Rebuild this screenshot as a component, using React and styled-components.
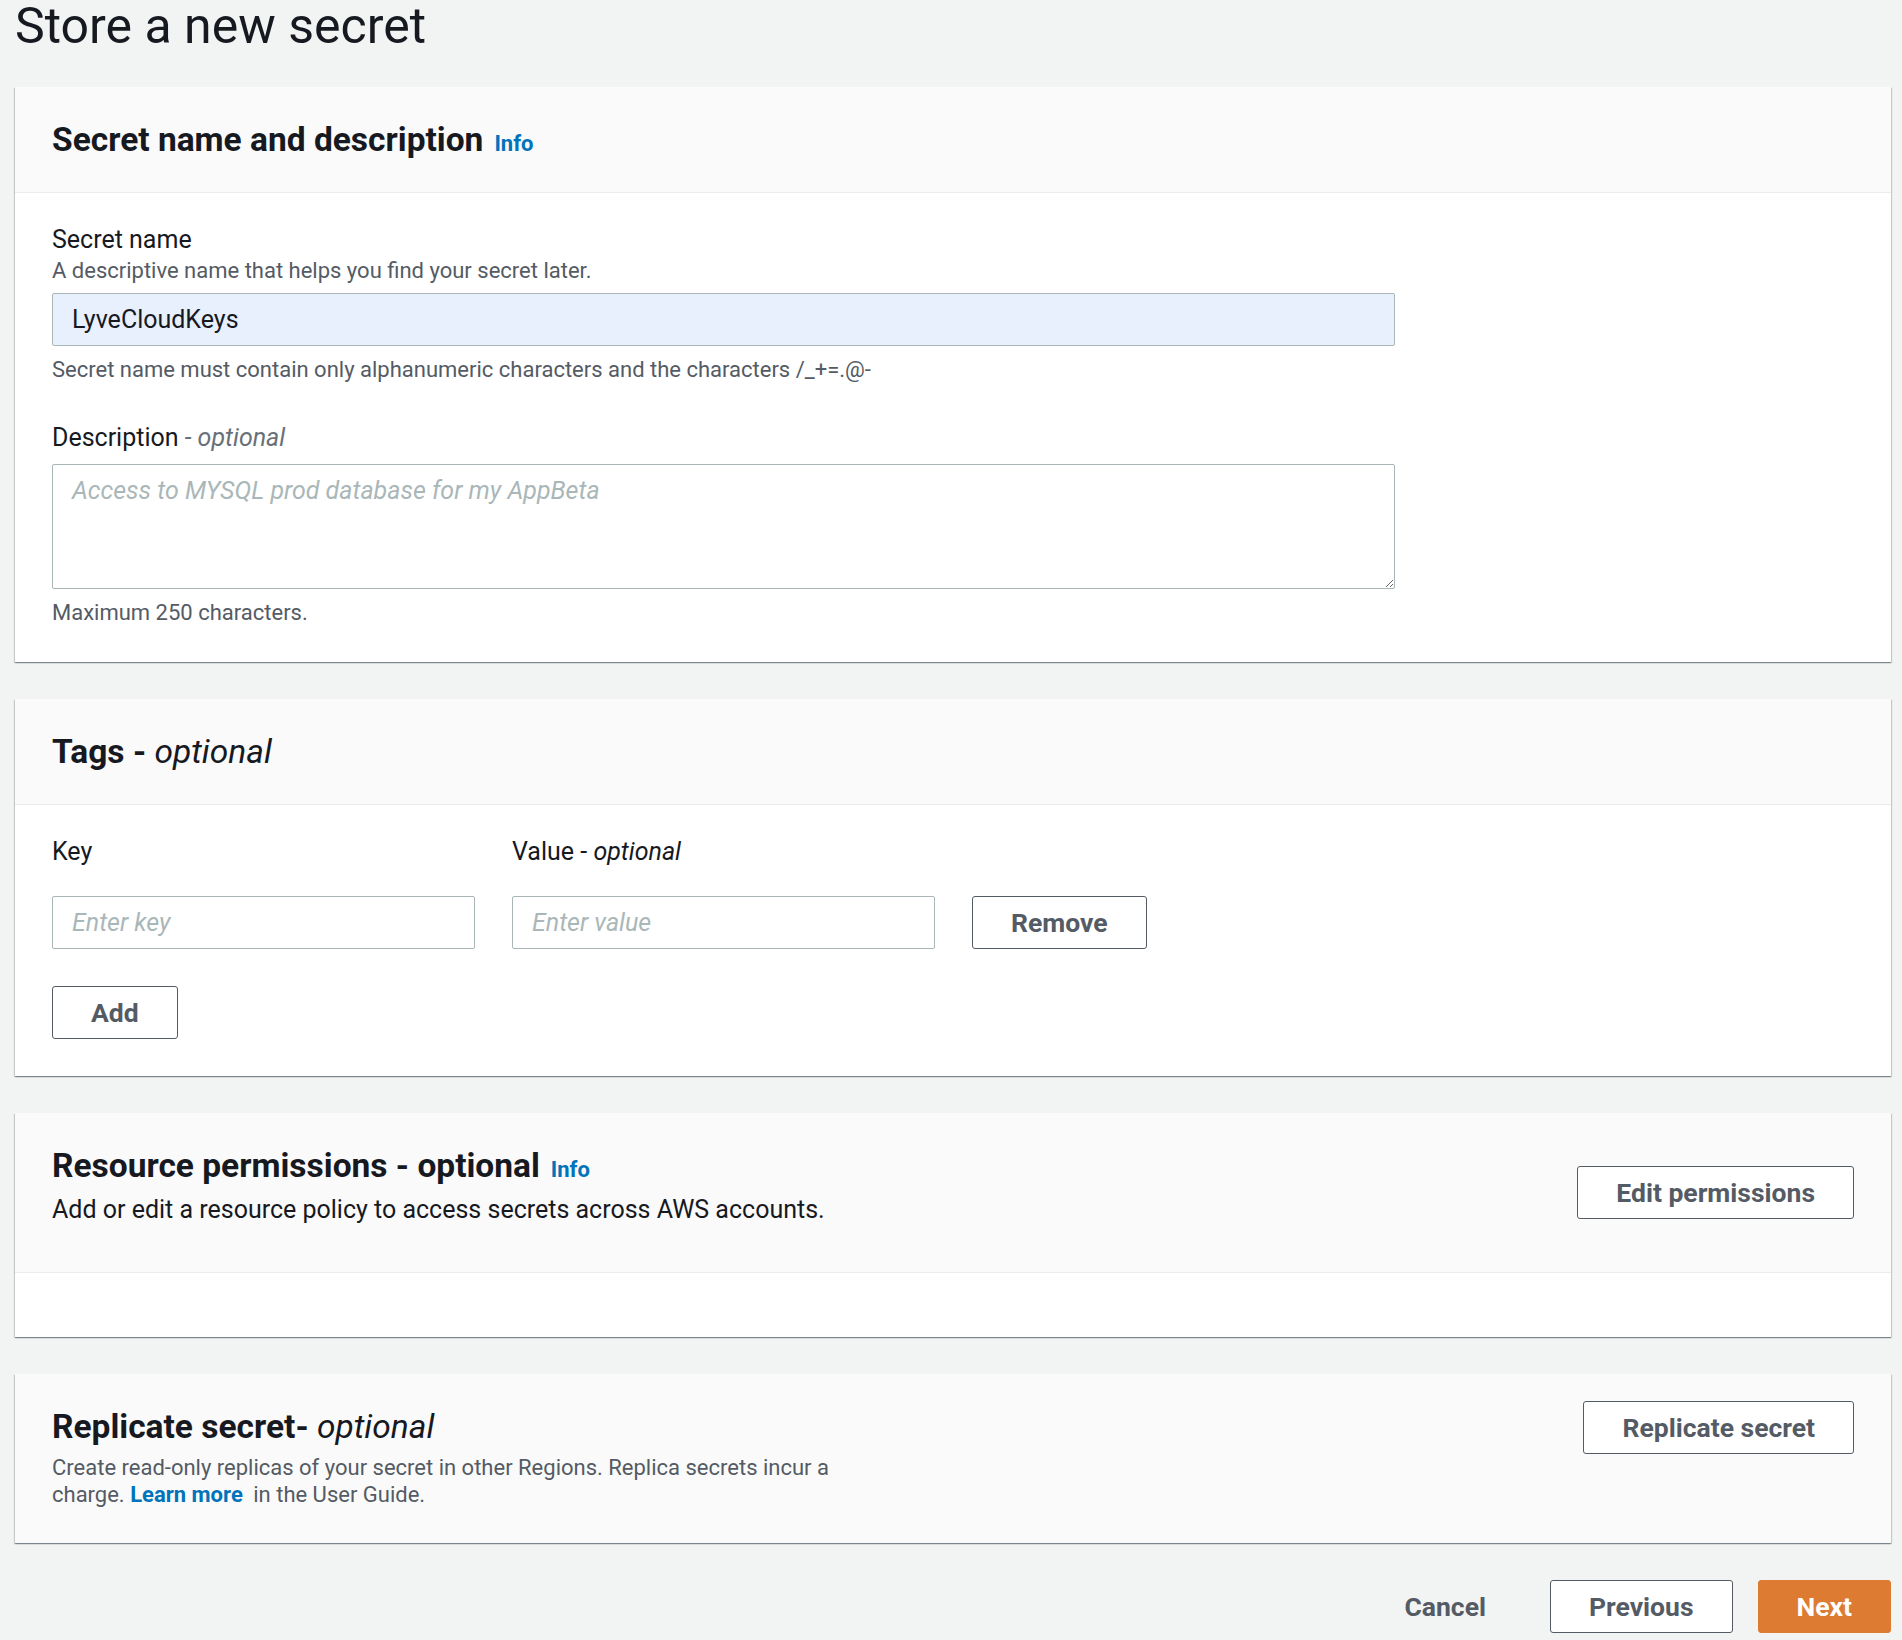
import React from 'react';
import styled, { createGlobalStyle } from 'styled-components';

const GlobalStyle = createGlobalStyle`
    html,
    body {
        margin: 0;
        background: #f2f3f3;
    }

    body {
        font-family: Roboto, 'Noto Sans', Arial, sans-serif;
        color: #16191f;
    }

    * {
        box-sizing: border-box;
    }
`;

const Page = styled.main`
    padding: 1px 11px 7px 15px;
`;

const Title = styled.h1`
    margin: 0 0 36px;
    font-size: 50px;
    line-height: 50px;
    font-weight: 400;
    color: #16191f;
`;

const Card = styled.section`
    background: #fff;
    margin-bottom: 37px;
    box-shadow: 0 1px 1px 0 rgba(0, 28, 36, 0.3), 1px 1px 1px 0 rgba(0, 28, 36, 0.15),
        -1px 1px 1px 0 rgba(0, 28, 36, 0.15);
`;

const CardHeader = styled.header`
    display: flex;
    justify-content: space-between;
    align-items: ${(props) => props.$align || 'center'};
    gap: 40px;
    padding: ${(props) => props.$padding || '33px 37px 32px'};
    background: #fafafa;
    border-bottom: ${(props) => (props.$flush ? 'none' : '1px solid #eaeded')};
`;

const HeaderText = styled.div`
    padding-top: ${(props) => props.$top || 0}px;
    padding-bottom: ${(props) => props.$bottom || 0}px;
`;

const Heading = styled.h2`
    margin: 0;
    font-size: 33.5px;
    line-height: 40px;
    font-weight: 700;
    color: #16191f;
`;

const Optional = styled.i`
    font-weight: ${(props) => props.$weight || 400};
    color: ${(props) => props.$color || 'inherit'};
`;

const InfoLink = styled.a`
    margin-left: 11px;
    font-size: 22px;
    line-height: 1;
    font-weight: 700;
    color: #0073bb;
    text-decoration: none;
`;

const HeaderDescription = styled.p`
    margin: ${(props) => (props.$small ? '7px' : '9px')} 0 0;
    max-width: ${(props) => (props.$small ? '800px' : 'none')};
    font-size: ${(props) => (props.$small ? '22px' : '25px')};
    line-height: ${(props) => (props.$small ? '27px' : '30px')};
    color: ${(props) => (props.$small ? '#545b64' : '#16191f')};
`;

const TextLink = styled.a`
    padding-right: 5px;
    font-weight: 700;
    color: #0073bb;
    text-decoration: none;
`;

const CardBody = styled.div`
    padding: ${(props) => props.$padding || '32px 37px 36px'};
    min-height: ${(props) => props.$minHeight || 0}px;
`;

const Field = styled.div`
    max-width: 1343px;

    & + & {
        margin-top: 40px;
    }
`;

const Label = styled.label`
    display: block;
    font-size: 25px;
    line-height: 30px;
    color: #16191f;
`;

const FieldHint = styled.div`
    margin-top: 2px;
    font-size: 22px;
    line-height: 27px;
    color: #545b64;
`;

const Constraint = styled.div`
    margin-top: 10px;
    font-size: 22px;
    line-height: 27px;
    color: #545b64;
`;

const TextInput = styled.input`
    display: block;
    width: 100%;
    height: 53px;
    margin-top: ${(props) => props.$top || 0}px;
    padding: 0 19px;
    border: 1px solid #aab7b8;
    border-radius: 2px;
    background: ${(props) => (props.$filled ? '#e8f0fe' : '#fff')};
    font-family: inherit;
    font-size: 25px;
    color: #16191f;
    outline: none;

    &::placeholder {
        font-style: italic;
        color: #aab7b8;
    }
`;

const TextArea = styled.textarea`
    display: block;
    width: 100%;
    height: 125px;
    margin-top: 11px;
    padding: 11px 19px;
    border: 1px solid #aab7b8;
    border-radius: 2px;
    font-family: inherit;
    font-size: 25px;
    line-height: 30px;
    color: #16191f;
    outline: none;

    &::placeholder {
        font-style: italic;
        color: #aab7b8;
    }
`;

const TagGrid = styled.div`
    display: grid;
    grid-template-columns: 423px 423px auto;
    column-gap: 37px;
    row-gap: 29px;
    align-items: center;
    justify-items: start;
`;

const Button = styled.button`
    height: 53px;
    padding: 0 38px;
    border: 1px solid
        ${(props) => (props.$variant === 'primary' ? '#dd7b33' : props.$variant === 'link' ? 'transparent' : '#545b64')};
    border-radius: 3px;
    background: ${(props) => (props.$variant === 'primary' ? '#dd7b33' : props.$variant === 'link' ? 'transparent' : '#fff')};
    font-family: inherit;
    font-size: 26.5px;
    font-weight: 700;
    color: ${(props) => (props.$variant === 'primary' ? '#fff' : '#545b64')};
    cursor: pointer;
    flex-shrink: 0;
`;

const AddButton = styled(Button)`
    margin-top: 37px;
`;

const Footer = styled.footer`
    display: flex;
    justify-content: flex-end;
    gap: 25px;
`;

const App = () => (
    <Page>
        <GlobalStyle />
        <Title>Store a new secret</Title>

        <Card>
            <CardHeader>
                <Heading>
                    Secret name and description
                    <InfoLink href="#">Info</InfoLink>
                </Heading>
            </CardHeader>
            <CardBody>
                <Field>
                    <Label>Secret name</Label>
                    <FieldHint>A descriptive name that helps you find your secret later.</FieldHint>
                    <TextInput $filled $top={9} value="LyveCloudKeys" readOnly />
                    <Constraint>
                        Secret name must contain only alphanumeric characters and the characters /_+=.@-
                    </Constraint>
                </Field>
                <Field>
                    <Label>
                        Description <Optional $color="#687078">- optional</Optional>
                    </Label>
                    <TextArea placeholder="Access to MYSQL prod database for my AppBeta" />
                    <Constraint>Maximum 250 characters.</Constraint>
                </Field>
            </CardBody>
        </Card>

        <Card>
            <CardHeader>
                <Heading>
                    Tags - <Optional>optional</Optional>
                </Heading>
            </CardHeader>
            <CardBody $padding="32px 37px 37px">
                <TagGrid>
                    <Label>Key</Label>
                    <Label>
                        Value - <Optional>optional</Optional>
                    </Label>
                    <span />
                    <TextInput placeholder="Enter key" />
                    <TextInput placeholder="Enter value" />
                    <Button>Remove</Button>
                </TagGrid>
                <AddButton>Add</AddButton>
            </CardBody>
        </Card>

        <Card>
            <CardHeader $padding="33px 37px">
                <HeaderText $bottom={14}>
                    <Heading>
                        Resource permissions - optional
                        <InfoLink href="#">Info</InfoLink>
                    </Heading>
                    <HeaderDescription>
                        Add or edit a resource policy to access secrets across AWS accounts.
                    </HeaderDescription>
                </HeaderText>
                <Button>Edit permissions</Button>
            </CardHeader>
            <CardBody $padding="0" $minHeight={64} />
        </Card>

        <Card>
            <CardHeader $flush $align="flex-start" $padding="27px 37px 35px">
                <HeaderText $top={6}>
                    <Heading>
                        Replicate secret- <Optional>optional</Optional>
                    </Heading>
                    <HeaderDescription $small>
                        Create read-only replicas of your secret in other Regions. Replica secrets incur a
                        charge. <TextLink href="#">Learn more</TextLink> in the User Guide.
                    </HeaderDescription>
                </HeaderText>
                <Button>Replicate secret</Button>
            </CardHeader>
        </Card>

        <Footer>
            <Button $variant="link">Cancel</Button>
            <Button>Previous</Button>
            <Button $variant="primary">Next</Button>
        </Footer>
    </Page>
);

export default App;
